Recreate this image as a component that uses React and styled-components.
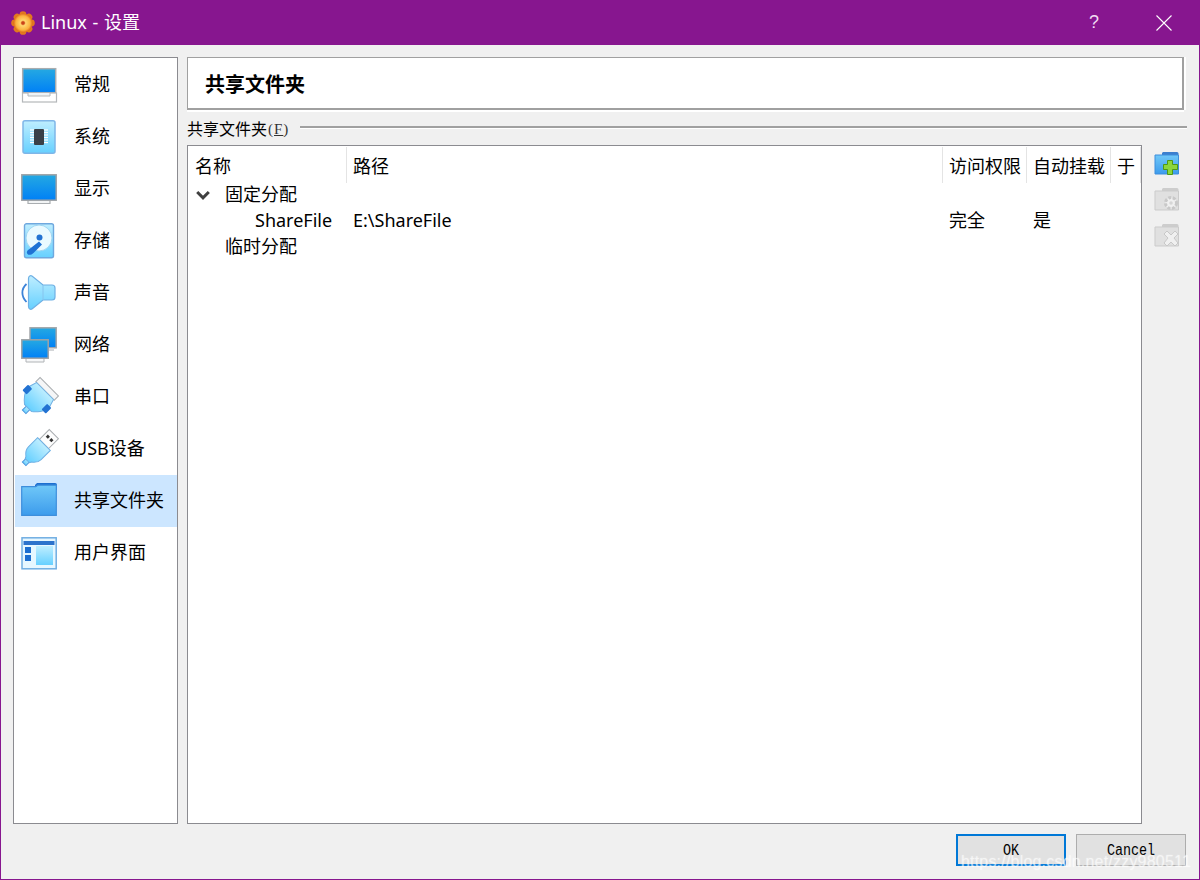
import styled, { createGlobalStyle } from "styled-components";

const GlobalStyle = createGlobalStyle`
    html, body {
        margin: 0;
        padding: 0;
        background: #f0f0f0;
    }
    * {
        box-sizing: border-box;
    }
`;

const uiFont = `"Noto Sans", "Noto Sans CJK SC", sans-serif`;

// shared gradients for the icons
function IconDefs() {
    return (
        <HiddenSvg width="0" height="0" aria-hidden="true">
            <defs>
                <linearGradient id="screen" x1="0" y1="0" x2="0" y2="1">
                    <stop offset="0" stopColor="#25a9e2" />
                    <stop offset="1" stopColor="#0080f6" />
                </linearGradient>
                <linearGradient id="sky" x1="0" y1="0" x2="0" y2="1">
                    <stop offset="0" stopColor="#bfeeff" />
                    <stop offset="1" stopColor="#66d0ff" />
                </linearGradient>
                <linearGradient id="folder" x1="0" y1="0" x2="0" y2="1">
                    <stop offset="0" stopColor="#70c8f8" />
                    <stop offset="1" stopColor="#3c9bec" />
                </linearGradient>
                <radialGradient id="gear" cx="0.5" cy="0.5" r="0.5">
                    <stop offset="0" stopColor="#d9501c" />
                    <stop offset="0.3" stopColor="#ffd56e" />
                    <stop offset="0.75" stopColor="#fbb23e" />
                    <stop offset="1" stopColor="#dc6a1a" />
                </radialGradient>
            </defs>
        </HiddenSvg>
    );
}

function AppLogo() {
    const petals = [0, 45, 90, 135, 180, 225, 270, 315];
    return (
        <svg width="24" height="24" viewBox="0 0 24 24">
            {petals.map(a => (
                <circle key={a} cx="12" cy="3.6" r="3.4" fill="#e2791f" transform={`rotate(${a} 12 12)`} />
            ))}
            <circle cx="12" cy="12" r="9.500" fill="url(#gear)" />
            <circle cx="12" cy="12" r="1.800" fill="#c9431a" />
        </svg>
    );
}

function LaptopIcon() {
    return (
        <svg width="36" height="36" viewBox="0 0 36 36">
            <rect x="1.700" y="1.700" width="33" height="24" fill="url(#screen)" stroke="#a9adb0" strokeWidth="1.500" />
            <rect x="1.500" y="26" width="34" height="9" fill="#fff" stroke="#b4b7ba" strokeWidth="1.200" />
            <path d="M7 26v3h22v-3" fill="#eef3f6" stroke="#b4b7ba" />
        </svg>
    );
}

function ChipIcon() {
    const pins = [11, 13.5, 16, 18.5, 21, 23.5];
    return (
        <svg width="36" height="36" viewBox="0 0 36 36">
            <rect x="2" y="1.700" width="32" height="32.600" rx="2" fill="url(#sky)" stroke="#7fb6e8" strokeWidth="1.500" />
            {pins.map(y => (
                <path key={y} d={`M9 ${y}h18`} stroke="#fff" strokeWidth="1.200" />
            ))}
            <rect x="13" y="10" width="10" height="16" rx="1" fill="#3a4048" />
        </svg>
    );
}

function MonitorIcon() {
    return (
        <svg width="36" height="36" viewBox="0 0 36 36">
            <path d="M7 29v3.500h22V29" fill="#f2f4f5" stroke="#a9adb0" strokeWidth="1.200" />
            <rect x="0.800" y="3.800" width="34.400" height="25.400" fill="url(#screen)" stroke="#9ea2a6" strokeWidth="1.500" />
        </svg>
    );
}

function DiskIcon() {
    return (
        <svg width="36" height="36" viewBox="0 0 36 36">
            <rect x="3.500" y="0.800" width="29" height="34" rx="2" fill="url(#sky)" stroke="#6fa8de" strokeWidth="1.400" />
            <circle cx="18" cy="15" r="13" fill="#eafaff" stroke="#9fd6f2" />
            <circle cx="18.500" cy="14.500" r="3" fill="#2272d2" />
            <path d="M6.500 31c-1.500-2 0-4 2-5l9.500-7.500 3 3-8.500 8.500c-2 2-5 2.500-6 1z" fill="#1f72d4" />
        </svg>
    );
}

function SpeakerIcon() {
    return (
        <svg width="36" height="36" viewBox="0 0 36 36">
            <path d="M5.500 9C0 14 0 21 5.500 27" fill="none" stroke="#3c83d8" strokeWidth="1.800" />
            <path d="M7.500 3.500c0-2.500 2-3.500 3.800-2.300L22 10h9a3 3 0 0 1 3 3v9a3 3 0 0 1-3 3h-9L11.300 33.800c-1.800 1.200-3.800.200-3.800-2.300z" fill="url(#sky)" stroke="#6fb0e4" strokeWidth="1.200" />
            <path d="M22 10v15" stroke="#86c4ee" />
        </svg>
    );
}

function NetworkIcon() {
    return (
        <svg width="36" height="36" viewBox="0 0 36 36">
            <rect x="9" y="0.800" width="26.200" height="20" fill="url(#screen)" stroke="#a2a6aa" strokeWidth="1.500" />
            <path d="M28 21h5v3h-5z" fill="#d4d6d8" />
            <path d="M5 31v4h18v-4" fill="#f6f7f8" stroke="#b0b3b6" />
            <rect x="0.800" y="12.800" width="26.400" height="18.400" fill="url(#screen)" stroke="#9ea2a6" strokeWidth="1.500" />
        </svg>
    );
}

function SerialIcon() {
    return (
        <svg width="36" height="36" viewBox="0 0 36 36">
            <g transform="rotate(45 18 18)">
                <rect x="5" y="3.500" width="26" height="6" fill="#f5f6f7" stroke="#a9adb0" />
                <path d="M15.500 33h5v6h-5z" fill="url(#sky)" stroke="#4a94dc" />
                <path d="M6 9.500h24l3 10c-1 5-6 11-10 14h-10c-4-3-9-9-10-14z" fill="url(#sky)" stroke="#6fb0e4" />
                <rect x="1.500" y="17" width="6" height="8" rx="1" fill="#2272d2" />
                <rect x="28.500" y="17" width="6" height="8" rx="1" fill="#2272d2" />
            </g>
        </svg>
    );
}

function UsbIcon() {
    return (
        <svg width="36" height="36" viewBox="0 0 36 36">
            <g transform="rotate(45 18 18)">
                <rect x="11.500" y="-3" width="13" height="14" fill="#fdfdfd" stroke="#a9adb0" />
                <rect x="14" y="1.500" width="3" height="3" fill="#333" />
                <rect x="19" y="1.500" width="3" height="3" fill="#333" />
                <path d="M15.500 33h5v6h-5z" fill="url(#sky)" stroke="#4a94dc" />
                <path d="M9 11h18v13c0 4-3 7-5 8.500l-1 2h-6l-1-2c-2-1.500-5-4.500-5-8.500z" fill="url(#sky)" stroke="#6fb0e4" />
            </g>
        </svg>
    );
}

function FolderIcon() {
    return (
        <svg width="36" height="36" viewBox="0 0 36 36">
            <path d="M14 2l2-2h18a2 2 0 0 1 2 2v5H14z" fill="#1d6fd0" />
            <path d="M.700 3.700h14l2-1.500h18.600v30.200H.700z" fill="url(#folder)" stroke="#3d8edc" strokeWidth="1.200" />
        </svg>
    );
}

function WindowIcon() {
    return (
        <svg width="36" height="36" viewBox="0 0 36 36">
            <rect x="1" y="2.800" width="34.200" height="31" fill="#e6f7ff" stroke="#70aee2" strokeWidth="1.500" />
            <rect x="2.500" y="6" width="31" height="4" fill="#2c73cc" />
            <rect x="4" y="12" width="6" height="6" fill="#1d6fd0" />
            <rect x="4" y="20" width="6" height="6" fill="#1d6fd0" />
            <rect x="15" y="11" width="17" height="19" fill="url(#sky)" />
        </svg>
    );
}

function AddFolderIcon() {
    return (
        <svg width="26" height="26" viewBox="0 0 26 26">
            <path d="M8 2l1-1h14a1.500 1.500 0 0 1 1.500 1.500V5H8z" fill="#3c7fce" />
            <path d="M1 4h23.500v19H1z" fill="url(#folder)" stroke="#3d8edc" />
            <path d="M13.500 9.500h5v4h5v5h-5v5h-5v-5h-4v-5h4z" fill="#8cd63c" stroke="#4f9a12" />
        </svg>
    );
}

function DisabledFolderIcon({ kind }) {
    return (
        <svg width="26" height="26" viewBox="0 0 26 26">
            <path d="M8 2l1-1h14a1.500 1.500 0 0 1 1.500 1.500V5H8z" fill="#cdcdcd" />
            <path d="M1 4h23.500v19H1z" fill="#e0e0e0" stroke="#cbcbcb" />
            {kind === "gear" ? (
                <g>
                    <circle cx="17" cy="16" r="5.500" fill="#f0f0f0" stroke="#c8c8c8" strokeWidth="3" strokeDasharray="3 1.500" />
                    <circle cx="17" cy="16" r="1.800" fill="#d6d6d6" />
                </g>
            ) : (
                <path d="M10 11l3-3 4 4 4-4 3 3-4 4 4 5-3 3-4-4-4 4-3-3 4-5z" fill="#f0f0f0" stroke="#c8c8c8" />
            )}
        </svg>
    );
}

const navItems = [
    { label: "常规", icon: <LaptopIcon /> },
    { label: "系统", icon: <ChipIcon /> },
    { label: "显示", icon: <MonitorIcon /> },
    { label: "存储", icon: <DiskIcon /> },
    { label: "声音", icon: <SpeakerIcon /> },
    { label: "网络", icon: <NetworkIcon /> },
    { label: "串口", icon: <SerialIcon /> },
    { label: "USB设备", icon: <UsbIcon /> },
    { label: "共享文件夹", icon: <FolderIcon />, selected: true },
    { label: "用户界面", icon: <WindowIcon /> },
];

export default function App() {
    return (
        <>
            <GlobalStyle />
            <IconDefs />
            <Window>
                <TitleBar>
                    <AppLogo />
                    <TitleText>Linux - 设置</TitleText>
                    <HelpButton>?</HelpButton>
                    <CloseButton aria-label="close">
                        <svg width="16" height="16" viewBox="0 0 16 16">
                            <path d="M.5.500l15 15M15.500.500l-15 15" stroke="#fff" strokeWidth="1.100" />
                        </svg>
                    </CloseButton>
                </TitleBar>
                <Body>
                    <Main>
                        <Sidebar>
                            {navItems.map(item => (
                                <NavItem key={item.label} $selected={item.selected}>
                                    <NavIcon>{item.icon}</NavIcon>
                                    <NavLabel>{item.label}</NavLabel>
                                </NavItem>
                            ))}
                        </Sidebar>
                        <Content>
                            <PageHeader>共享文件夹</PageHeader>
                            <GroupLabel>
                                <span>共享文件夹</span>
                                <Mnemonic>(<u>F</u>)</Mnemonic>
                                <GroupLine />
                            </GroupLabel>
                            <TableArea>
                                <Table>
                                    <HeaderRow>
                                        <HeaderCell $first>名称</HeaderCell>
                                        <HeaderCell>路径</HeaderCell>
                                        <HeaderCell>访问权限</HeaderCell>
                                        <HeaderCell>自动挂载</HeaderCell>
                                        <HeaderCell>于</HeaderCell>
                                    </HeaderRow>
                                    <TreeRow>
                                        <NameCell $indent={8}>
                                            <Expander>
                                                <svg width="14" height="10" viewBox="0 0 14 10">
                                                    <path d="M1.200 2l5.800 5.800L12.800 2" fill="none" stroke="#404040" strokeWidth="3" />
                                                </svg>
                                            </Expander>
                                            固定分配
                                        </NameCell>
                                    </TreeRow>
                                    <TreeRow>
                                        <NameCell $indent={67}>ShareFile</NameCell>
                                        <Cell>E:\ShareFile</Cell>
                                        <Cell>完全</Cell>
                                        <Cell>是</Cell>
                                    </TreeRow>
                                    <TreeRow>
                                        <NameCell $indent={37}>临时分配</NameCell>
                                    </TreeRow>
                                </Table>
                                <SideTools>
                                    <AddFolderIcon />
                                    <DisabledFolderIcon kind="gear" />
                                    <DisabledFolderIcon kind="cross" />
                                </SideTools>
                            </TableArea>
                        </Content>
                    </Main>
                    <Footer>
                        <DialogButton $primary><ButtonText>OK</ButtonText></DialogButton>
                        <DialogButton><ButtonText>Cancel</ButtonText></DialogButton>
                    </Footer>
                </Body>
                <Watermark>https://blog.csdn.net/zzy980511</Watermark>
            </Window>
        </>
    );
}

const HiddenSvg = styled.svg`
    position: absolute;
`;

const Window = styled.div`
    position: relative;
    width: 1200px;
    height: 880px;
    display: flex;
    flex-direction: column;
    background: #f0f0f0;
    border: 1px solid #87168f;
    font-family: ${uiFont};
    font-size: 18px;
    color: #000;
    overflow: hidden;
`;

const TitleBar = styled.div`
    height: 44px;
    flex: none;
    display: flex;
    align-items: center;
    padding: 0 0 1px 10px;
    background: #87168f;
    color: #fff;
`;

const TitleText = styled.div`
    flex: 1;
    margin-left: 6px;
    font-size: 18px;
    line-height: 24px;
    word-spacing: 1px;
    padding-bottom: 2px;
`;

const HelpButton = styled.div`
    width: 70px;
    text-align: center;
    font-size: 18px;
    color: #f0dcf2;
    font-family: "Liberation Sans", sans-serif;
`;

const CloseButton = styled.div`
    width: 70px;
    display: flex;
    justify-content: center;
`;

const Body = styled.div`
    flex: 1;
    display: flex;
    flex-direction: column;
    padding: 12px 13px 13px 12px;
    min-height: 0;
`;

const Main = styled.div`
    height: 768px;
    display: flex;
    gap: 9px;
`;

const Sidebar = styled.div`
    width: 165px;
    flex: none;
    background: #fff;
    border: 1px solid #8b8b90;
    padding: 1px 0 1px 1px;
`;

const NavItem = styled.div`
    height: 52px;
    display: flex;
    align-items: center;
    padding-left: 6px;
    gap: 17px;
    background: ${p => (p.$selected ? "#cce6ff" : "transparent")};
`;

const NavIcon = styled.div`
    width: 36px;
    height: 36px;
    flex: none;
    svg {
        display: block;
        overflow: visible;
    }
`;

const NavLabel = styled.span`
    padding-bottom: 4px;
`;

const Content = styled.div`
    flex: 1;
    min-width: 0;
    display: flex;
    flex-direction: column;
`;

const PageHeader = styled.div`
    width: 997px;
    height: 53px;
    display: flex;
    align-items: center;
    padding-left: 17px;
    background: #fff;
    border: 1px solid #a0a0a0;
    border-bottom-width: 2px;
    border-right-width: 2px;
    box-shadow: 0 2px 0 #fff, 2px 0 0 #fff;
    font-size: 20px;
    font-weight: 700;
`;

const GroupLabel = styled.div`
    height: 35px;
    display: flex;
    align-items: center;
    padding-top: 2px;
    font-size: 16px;
    line-height: 20px;
`;

const Mnemonic = styled.span`
    font-family: "Liberation Serif", serif;
    font-size: 15px;
    letter-spacing: 1px;
    margin-left: 1px;
    color: #333;
`;

const GroupLine = styled.div`
    flex: 1;
    height: 3px;
    margin: 0 -1px 3px 11px;
    border-top: 2px solid #a0a0a0;
    border-bottom: 1px solid #fff;
`;

const TableArea = styled.div`
    flex: 1;
    min-height: 0;
    display: flex;
    gap: 12px;
`;

const Table = styled.div`
    width: 955px;
    flex: none;
    background: #fff;
    border: 1px solid #8b8b90;
    padding-top: 1px;
`;

const columns = "159px 596px 84px 84px 30px";

const HeaderRow = styled.div`
    display: grid;
    grid-template-columns: ${columns};
    height: 36px;
`;

const HeaderCell = styled.div`
    display: flex;
    align-items: center;
    padding-left: ${p => (p.$first ? "7px" : "6px")};
    border-right: 1px solid #e4e4e4;
    white-space: nowrap;
`;

const TreeRow = styled.div`
    display: grid;
    grid-template-columns: ${columns};
    height: 26px;
    padding-bottom: 4px;
    line-height: 22px;
    align-items: center;
    white-space: nowrap;
`;

const NameCell = styled.div`
    display: flex;
    align-items: center;
    padding-left: ${p => p.$indent}px;
`;

const Expander = styled.span`
    width: 29px;
    display: flex;
    padding-top: 2px;
    svg {
        display: block;
    }
`;

const Cell = styled.div`
    padding-left: 6px;
`;

const SideTools = styled.div`
    display: flex;
    flex-direction: column;
    gap: 10px;
    padding-top: 6px;
`;

const Footer = styled.div`
    flex: 1;
    display: flex;
    justify-content: flex-end;
    gap: 10px;
    padding-top: 10px;
`;

const DialogButton = styled.div`
    width: 110px;
    height: 32px;
    display: flex;
    align-items: center;
    justify-content: center;
    background: #e1e1e1;
    border: ${p => (p.$primary ? "2px solid #0078d7" : "1px solid #adadad")};
    font-family: "Liberation Mono", monospace;
    font-size: 13.4px;
`;

const ButtonText = styled.span`
    display: block;
    transform: scaleY(1.25);
`;

const Watermark = styled.div`
    position: absolute;
    right: 8px;
    bottom: 8px;
    font-family: "Liberation Sans", sans-serif;
    font-size: 16px;
    letter-spacing: 0.2px;
    color: rgba(255, 255, 255, 0.6);
    text-shadow: 0 0 2px rgba(255, 255, 255, 0.45);
    white-space: nowrap;
`;
